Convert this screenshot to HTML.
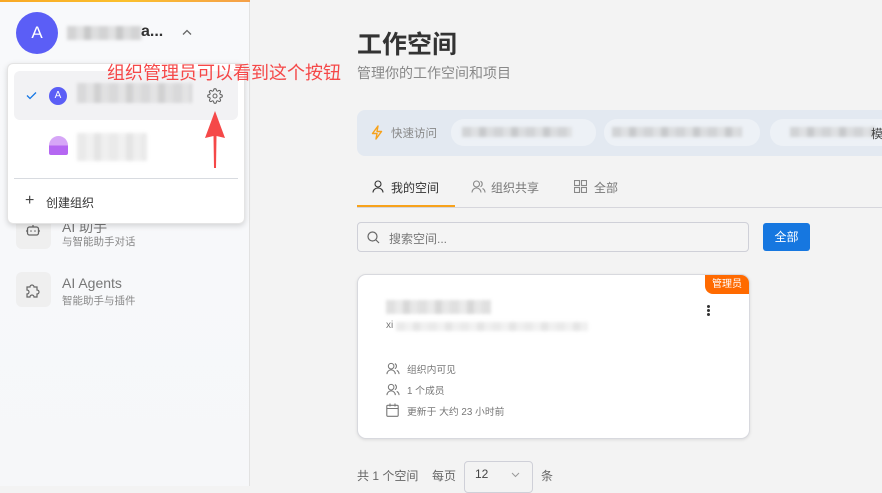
<!DOCTYPE html>
<html><head><meta charset="utf-8"><style>
*{margin:0;padding:0;box-sizing:border-box}
body{width:882px;height:486px;overflow:hidden;background:#f3f3f3;font-family:"Liberation Sans","Noto Sans CJK SC",sans-serif;position:relative;color:#333}
.a{position:absolute}
.blur{position:absolute;filter:blur(1.5px);background:repeating-linear-gradient(90deg,#bbb 0 9px,#d2d2d2 9px 17px,#a9a9a9 17px 24px,#ccc 24px 32px)}
.t{white-space:nowrap;position:absolute}
</style></head><body>
<!-- sidebar -->
<div class="a" style="left:0;top:0;width:250px;height:486px;background:linear-gradient(#f8f9fb,#f6f7f9);border-right:1px solid #e2e2e2"></div>
<div class="a" style="left:0;top:0;width:250px;height:2px;background:linear-gradient(90deg,#f9a825,#fbc02d 50%,#f5a04a)"></div>
<div class="a" style="left:16px;top:12px;width:42px;height:42px;border-radius:50%;background:#5b5ef6;color:#fff;font-size:17px;line-height:42px;text-align:center">A</div>
<div class="blur" style="left:67px;top:26px;width:75px;height:14px;opacity:.6"></div>
<div class="t" style="left:141px;top:23px;font-size:16px;font-weight:bold;color:#333">a...</div>
<svg class="a" style="left:182px;top:29px" width="10" height="7" viewBox="0 0 10 7"><path d="M1 5.5L5 1.5L9 5.5" fill="none" stroke="#666" stroke-width="1.3"/></svg>

<!-- sidebar items -->
<div class="a" style="left:16px;top:214px;width:35px;height:35px;border-radius:6px;background:#efefef"></div>
<svg class="a" style="left:25px;top:224px" width="16" height="14" viewBox="0 0 16 14"><rect x="2.5" y="3" width="11" height="8" rx="2" fill="none" stroke="#666" stroke-width="1.3"/><path d="M1 7h1.5M13.5 7H15M8 1v2" stroke="#666" stroke-width="1.3"/><circle cx="6" cy="7" r=".8" fill="#666"/><circle cx="10" cy="7" r=".8" fill="#666"/></svg>
<div class="t" style="left:62px;top:217px;font-size:14px;color:#777">AI 助手</div>
<div class="t" style="left:62px;top:234px;font-size:10.5px;color:#888">与智能助手对话</div>
<div class="a" style="left:16px;top:272px;width:35px;height:35px;border-radius:6px;background:#efefef"></div>
<svg class="a" style="left:24px;top:281px" width="18" height="18" viewBox="0 0 18 18"><path d="M3 6h3a2 2 0 1 1 4 0h3v3a2 2 0 1 1 0 4v3h-3a2 2 0 1 0-4 0H3v-3a2 2 0 1 0 0-4z" fill="none" stroke="#666" stroke-width="1.2"/></svg>
<div class="t" style="left:62px;top:275px;font-size:14px;color:#777">AI Agents</div>
<div class="t" style="left:62px;top:293px;font-size:10.5px;color:#888">智能助手与插件</div>

<!-- dropdown -->
<div class="a" style="left:7px;top:63px;width:238px;height:161px;background:#fff;border-radius:6px;box-shadow:0 2px 6px rgba(0,0,0,.15);border:1px solid #e4e4e4"></div>
<div class="a" style="left:14px;top:71px;width:224px;height:49px;background:#f2f2f4;border-radius:6px"></div>
<svg class="a" style="left:26px;top:91px" width="11" height="9" viewBox="0 0 11 9"><path d="M1 4.5L4 7.5L10 1.5" fill="none" stroke="#1677e5" stroke-width="1.3"/></svg>
<div class="a" style="left:49px;top:87px;width:18px;height:18px;border-radius:50%;background:#5b5ef6;color:#fff;font-size:10px;line-height:18px;text-align:center">A</div>
<div class="blur" style="left:77px;top:83px;width:115px;height:20px;opacity:.45"></div>
<svg class="a" style="left:207px;top:88px" width="16" height="16" viewBox="0 0 24 24"><path d="M12 15a3 3 0 1 0 0-6 3 3 0 0 0 0 6z" fill="none" stroke="#666" stroke-width="1.6"/><path d="M19.4 15a1.65 1.65 0 0 0 .33 1.820l.06.06a2 2 0 1 1-2.830 2.830l-.06-.06a1.65 1.65 0 0 0-1.820-.33 1.65 1.65 0 0 0-1 1.510V21a2 2 0 1 1-4 0v-.09A1.65 1.65 0 0 0 9 19.4a1.65 1.65 0 0 0-1.820.33l-.06.06a2 2 0 1 1-2.830-2.830l.06-.06A1.65 1.65 0 0 0 4.6 15a1.65 1.65 0 0 0-1.510-1H3a2 2 0 1 1 0-4h.09A1.65 1.65 0 0 0 4.6 9a1.65 1.65 0 0 0-.33-1.820l-.06-.06a2 2 0 1 1 2.830-2.830l.06.06A1.65 1.65 0 0 0 9 4.6a1.65 1.65 0 0 0 1-1.510V3a2 2 0 1 1 4 0v.09a1.65 1.65 0 0 0 1 1.510 1.65 1.65 0 0 0 1.820-.33l.06-.06a2 2 0 1 1 2.830 2.830l-.06.06A1.65 1.65 0 0 0 19.4 9a1.65 1.65 0 0 0 1.510 1H21a2 2 0 1 1 0 4h-.09a1.65 1.65 0 0 0-1.510 1z" fill="none" stroke="#666" stroke-width="1.6"/></svg>
<div class="a" style="left:49px;top:136px;width:19px;height:19px;border-radius:50% 50% 2px 2px;background:linear-gradient(#d6a6f7 50%,#b567f2 50%)"></div>
<div class="blur" style="left:77px;top:133px;width:70px;height:28px;opacity:.3"></div>
<div class="a" style="left:14px;top:178px;width:224px;height:1px;background:#d8dbe0"></div>
<div class="t" style="left:25px;top:192px;font-size:16px;color:#444">+</div>
<div class="t" style="left:46px;top:194px;font-size:12px;color:#333">创建组织</div>

<!-- annotation -->
<div class="t" style="left:107px;top:59px;font-size:18px;color:#f54848">组织管理员可以看到这个按钮</div>
<svg class="a" style="left:203px;top:110px" width="24" height="60" viewBox="0 0 24 60"><path d="M12 1L22 28L13.5 26L13 58H11L10.5 26L2 28Z" fill="#f54848"/></svg>

<!-- main -->
<div class="t" style="left:357px;top:25px;font-size:25px;font-weight:bold;color:#333">工作空间</div>
<div class="t" style="left:357px;top:63px;font-size:14px;color:#888">管理你的工作空间和项目</div>

<div class="a" style="left:357px;top:110px;width:525px;height:46px;background:#e3e9f1;border-radius:8px 0 0 8px"></div>
<svg class="a" style="left:371px;top:125px" width="12" height="15" viewBox="0 0 12 15"><path d="M7 1L1.5 8.5H6L5 14L10.5 6.5H6Z" fill="none" stroke="#f7a21b" stroke-width="1.4" stroke-linejoin="round"/></svg>
<div class="t" style="left:391px;top:125px;font-size:11.5px;color:#888">快速访问</div>
<div class="a" style="left:451px;top:119px;width:145px;height:27px;background:#edf1f6;border-radius:13px"></div>
<div class="a" style="left:604px;top:119px;width:156px;height:27px;background:#edf1f6;border-radius:13px"></div>
<div class="a" style="left:770px;top:119px;width:112px;height:27px;background:#edf1f6;border-radius:13px 0 0 13px"></div>
<div class="blur" style="left:462px;top:127px;width:110px;height:10px;opacity:.55"></div>
<div class="blur" style="left:612px;top:127px;width:130px;height:10px;opacity:.55"></div>
<div class="blur" style="left:790px;top:127px;width:85px;height:10px;opacity:.55"></div>
<div class="t" style="left:871px;top:125px;font-size:12px;color:#444">模</div>

<svg class="a" style="left:372px;top:180px" width="12" height="13" viewBox="0 0 12 13"><circle cx="6" cy="4" r="3" fill="none" stroke="#333" stroke-width="1.1"/><path d="M1 12.5a5 4.5 0 0 1 10 0" fill="none" stroke="#333" stroke-width="1.1"/></svg>
<div class="t" style="left:391px;top:179px;font-size:12px;color:#333">我的空间</div>
<svg class="a" style="left:471px;top:180px" width="15" height="13" viewBox="0 0 15 13"><circle cx="5.5" cy="4" r="3" fill="none" stroke="#888" stroke-width="1.1"/><path d="M1 12.5a4.5 4.5 0 0 1 9 0M9.5 1.3a3 3 0 0 1 0 5.4M11.5 8.5a4.5 4.5 0 0 1 2.5 4" fill="none" stroke="#888" stroke-width="1.1"/></svg>
<div class="t" style="left:491px;top:179px;font-size:12px;color:#777">组织共享</div>
<svg class="a" style="left:574px;top:180px" width="13" height="13" viewBox="0 0 13 13"><g fill="none" stroke="#888" stroke-width="1.1"><rect x=".5" y=".5" width="5" height="5"/><rect x="7.5" y=".5" width="5" height="5"/><rect x=".5" y="7.5" width="5" height="5"/><rect x="7.5" y="7.5" width="5" height="5"/></g></svg>
<div class="t" style="left:594px;top:179px;font-size:12px;color:#777">全部</div>
<div class="a" style="left:357px;top:207px;width:525px;height:1px;background:#d6d6dc"></div>
<div class="a" style="left:357px;top:205px;width:98px;height:2px;background:#f7a21b"></div>

<div class="a" style="left:357px;top:222px;width:392px;height:30px;border:1px solid #cfd0d8;border-radius:4px;background:#f4f4f4"></div>
<svg class="a" style="left:367px;top:231px" width="13" height="13" viewBox="0 0 13 13"><circle cx="5.5" cy="5.5" r="4.5" fill="none" stroke="#666" stroke-width="1.2"/><path d="M9 9l3 3" stroke="#666" stroke-width="1.2"/></svg>
<div class="t" style="left:389px;top:230px;font-size:12px;color:#777">搜索空间...</div>
<div class="a" style="left:763px;top:223px;width:47px;height:28px;background:#1677e0;border-radius:3px;color:#fff;font-size:12px;line-height:28px;text-align:center">全部</div>

<div class="a" style="left:357px;top:274px;width:393px;height:165px;background:#fff;border:1px solid #d8d9de;border-radius:9px;box-shadow:0 1px 3px rgba(0,0,0,.1);overflow:hidden">
<div class="a" style="right:0;top:0;width:44px;height:19px;background:#ff6a00;border-radius:0 0 0 8px;color:#fff;font-size:10px;line-height:19px;text-align:center">管理员</div>
</div>
<div class="blur" style="left:386px;top:300px;width:105px;height:14px;opacity:.45"></div>
<div class="t" style="left:386px;top:320px;font-size:10px;color:#777">xi</div>
<div class="blur" style="left:396px;top:322px;width:192px;height:9px;opacity:.3"></div>
<div class="a" style="left:707px;top:305px;width:3px;height:3px;border-radius:50%;background:#333;box-shadow:0 4px 0 #333,0 8px 0 #333"></div>
<svg class="a" style="left:386px;top:362px" width="14" height="13" viewBox="0 0 15 13"><circle cx="5.5" cy="4" r="3" fill="none" stroke="#777" stroke-width="1.1"/><path d="M1 12.5a4.5 4.5 0 0 1 9 0M9.5 1.3a3 3 0 0 1 0 5.4M11.5 8.5a4.5 4.5 0 0 1 2.5 4" fill="none" stroke="#777" stroke-width="1.1"/></svg>
<div class="t" style="left:407px;top:362px;font-size:9.8px;color:#777">组织内可见</div>
<svg class="a" style="left:386px;top:383px" width="14" height="13" viewBox="0 0 15 13"><circle cx="5.5" cy="4" r="3" fill="none" stroke="#777" stroke-width="1.1"/><path d="M1 12.5a4.5 4.5 0 0 1 9 0M9.5 1.3a3 3 0 0 1 0 5.4M11.5 8.5a4.5 4.5 0 0 1 2.5 4" fill="none" stroke="#777" stroke-width="1.1"/></svg>
<div class="t" style="left:407px;top:383px;font-size:9.8px;color:#777">1 个成员</div>
<svg class="a" style="left:386px;top:403px" width="13" height="14" viewBox="0 0 13 14"><rect x=".8" y="2.3" width="11.4" height="11" rx="1" fill="none" stroke="#777" stroke-width="1.1"/><path d="M.8 5.5h11.4M4 .5v3M9 .5v3" stroke="#777" stroke-width="1.1"/></svg>
<div class="t" style="left:407px;top:404px;font-size:9.8px;color:#777">更新于 大约 23 小时前</div>

<div class="t" style="left:357px;top:467px;font-size:12px;color:#666">共 1 个空间</div>
<div class="t" style="left:432px;top:467px;font-size:12px;color:#666">每页</div>
<div class="a" style="left:464px;top:461px;width:69px;height:32px;border:1px solid #cfd0d8;border-radius:4px"></div>
<div class="t" style="left:475px;top:467px;font-size:12px;color:#444">12</div>
<svg class="a" style="left:511px;top:472px" width="9" height="6" viewBox="0 0 9 6"><path d="M1 1l3.5 3.5L8 1" fill="none" stroke="#999" stroke-width="1"/></svg>
<div class="t" style="left:541px;top:467px;font-size:12px;color:#666">条</div>
</body></html>
